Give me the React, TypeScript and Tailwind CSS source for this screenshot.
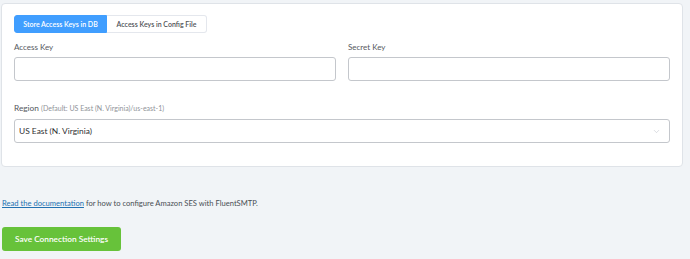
import { ChevronDown } from 'lucide-react';

export default function App() {
  return (
    <div className="min-h-[259px] w-[690px] bg-[#f1f4f7] pt-[3px] pl-[1px] pr-[7px] text-[#606266]" style={{ fontFamily: 'Lato, "Open Sans", sans-serif' }}>
      {/* Card */}
      <div className="h-[164px] rounded-[4px] border border-[#dfe3e8] bg-white px-[12px] pt-[11px]">
        {/* Tabs */}
        <div className="flex h-[18px]">
          <button className="flex w-[93px] items-center justify-center whitespace-nowrap rounded-l-[3px] border border-[#409eff] bg-[#409eff] text-[7px] font-semibold text-white">
            Store Access Keys in DB
          </button>
          <button className="flex w-[100px] items-center justify-center whitespace-nowrap rounded-r-[3px] border border-l-0 border-[#e4e7ed] bg-white text-[7px] font-semibold text-[#4f5257]">
            Access Keys in Config File
          </button>
        </div>

        {/* Key fields */}
        <div className="mt-[7px] grid grid-cols-2 gap-x-[12px]">
          <div>
            <label className="block h-[14px] text-[8px] leading-[14px] text-[#55585e]">Access Key</label>
            <input className="mt-[3px] block h-[24px] w-full rounded-[3px] border border-[#c4c7cc] bg-white" />
          </div>
          <div>
            <label className="block h-[14px] text-[8px] leading-[14px] text-[#55585e]">Secret Key</label>
            <input className="mt-[3px] block h-[24px] w-full rounded-[3px] border border-[#c4c7cc] bg-white" />
          </div>
        </div>

        {/* Region */}
        <div className="mt-[20px]">
          <label className="block h-[14px] whitespace-nowrap text-[8.3px] leading-[14px] text-[#55585e]">
            Region <span className="text-[7px] text-[#909399]">(Default: US East (N. Virginia)/us-east-1)</span>
          </label>
          <div className="mt-[4px] flex h-[24px] items-center justify-between rounded-[3px] border border-[#c4c7cc] bg-white pl-[4px] pr-[8px]">
            <span className="text-[8.4px] text-[#303133]">US East (N. Virginia)</span>
            <ChevronDown className="h-[9px] w-[9px] text-[#c0c4cc]" strokeWidth={1.5} />
          </div>
        </div>
      </div>

      {/* Doc link */}
      <p className="mt-[29px] whitespace-nowrap pl-[1px] text-[7.6px] leading-[14px] text-[#4a4f55]">
        <a className="text-[#2271b1] underline">Read the documentation</a> for how to configure Amazon SES with FluentSMTP.
      </p>

      {/* Save */}
      <button className="mt-[17px] ml-[1px] flex h-[24px] w-[119px] items-center justify-center whitespace-nowrap rounded-[3px] bg-[#67c23a] text-[8.3px] font-semibold text-white">
        Save Connection Settings
      </button>
    </div>
  );
}
